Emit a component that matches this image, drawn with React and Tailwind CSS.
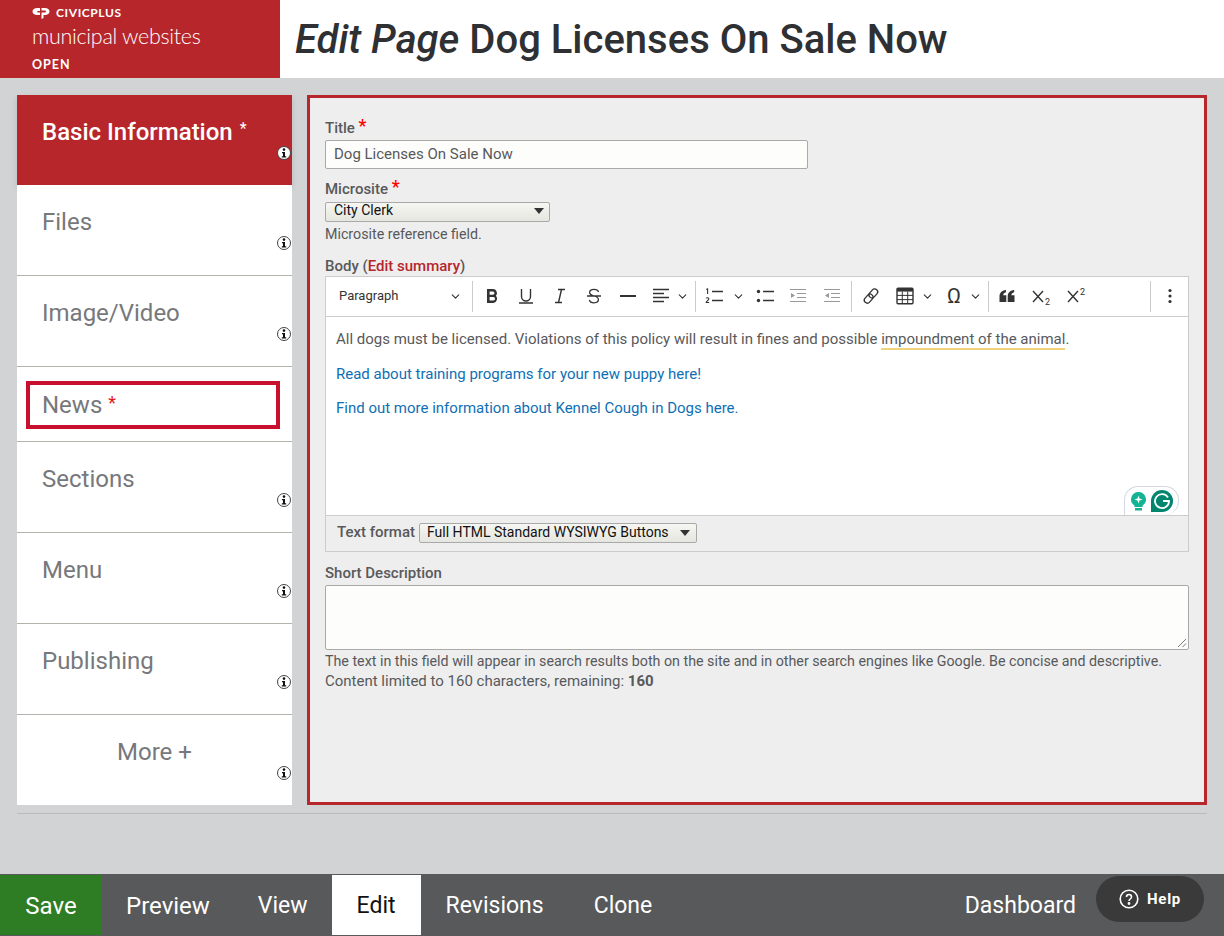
import React from 'react'
import { ChevronDown } from 'lucide-react'

const font = { fontFamily: 'Roboto, sans-serif' }

function InfoDot() {
  return (
    <span className="absolute bottom-[25px] right-[1px] flex h-[14px] w-[14px] items-center justify-center rounded-full border border-[#444] bg-white">
      <svg width="10" height="10" viewBox="0 0 10 10">
        <circle cx="5" cy="1.6" r="1.3" fill="#111" />
        <path d="M3 4h3v4.2h1.2V9.5H2.8V8.2H4V5.2H3z" fill="#111" />
      </svg>
    </span>
  )
}

function Tab({ label, h, center }) {
  return (
    <div className={`relative bg-white ${h} ${center ? 'pl-0 text-center' : 'border-b border-[#b3b3ab] pl-[25px]'} pt-[22px] text-[24px] leading-[30px] text-[#77787b]`}>
      {label}
      <InfoDot />
    </div>
  )
}

// toolbar glyphs, drawn on a 20 box like the editor's own
function Bold() {
  return <svg width="20" height="20" viewBox="0 0 20 20"><path d="M5 3h6a4 4 0 0 1 2.9 6.7A4.4 4.4 0 0 1 11.5 17H5zM7.6 5.4v3.4h3.2a1.7 1.7 0 0 0 0-3.4zm0 5.7v3.5h3.7a1.75 1.75 0 0 0 0-3.5z" fill="#333" /></svg>
}
function Underline() {
  return <svg width="20" height="20" viewBox="0 0 20 20" fill="none" stroke="#333" strokeWidth="1.4"><path d="M5.5 3v7.5a4.5 4.5 0 0 0 9 0V3M3 17h14" /></svg>
}
function Italic() {
  return <svg width="20" height="20" viewBox="0 0 20 20" fill="none" stroke="#333" strokeWidth="1.4"><path d="M8 3.5h7M5 16.5h7M11.5 3.5l-3 13" /></svg>
}
function Strike() {
  return <svg width="20" height="20" viewBox="0 0 20 20" fill="none" stroke="#333" strokeWidth="1.3"><path d="M14.5 6C14 4 12 3.3 10 3.3 7.5 3.3 5.6 4.5 5.6 6.5c0 2 2 2.8 4.4 3.5 2.6.7 4.4 1.7 4.4 3.6 0 2-2 3.2-4.4 3.2-2.4 0-4.2-1-4.6-3M3 10h14" /></svg>
}
function Rule() {
  return <svg width="20" height="20" viewBox="0 0 20 20"><rect x="2" y="9" width="16" height="2" fill="#333" /></svg>
}
function Align() {
  return <svg width="20" height="20" viewBox="0 0 20 20" fill="none" stroke="#333" strokeWidth="1.4"><path d="M2 3.5h16M2 7.5h11M2 11.5h16M2 15.5h11" /></svg>
}
function Numbered() {
  return (
    <svg width="20" height="20" viewBox="0 0 20 20" fill="none">
      <path d="M8 5.5h11M8 14.500h11" stroke="#333" strokeWidth="1.4" />
      <path d="M3.6 2.5v5.5M2.4 3.6l1.2-1.1M2.2 12.4c.3-1 2.7-1 2.700.4 0 1.2-2.700 2.400-2.700 3.700h3" stroke="#333" strokeWidth="1.1" />
    </svg>
  )
}
function Bulleted() {
  return (
    <svg width="20" height="20" viewBox="0 0 20 20" fill="none">
      <circle cx="3.500" cy="5.500" r="1.700" fill="#333" />
      <circle cx="3.500" cy="14.500" r="1.700" fill="#333" />
      <path d="M8 5.500h11M8 14.500h11" stroke="#333" strokeWidth="1.4" />
    </svg>
  )
}
function Indent({ out }) {
  return (
    <svg width="20" height="20" viewBox="0 0 20 20" fill="none">
      <path d="M2 3.500h16M9 7.500h9M9 11.500h9M2 15.500h16" stroke="#999" strokeWidth="1.2" />
      <path d={out ? 'M7 7l-4 2.500 4 2.500z' : 'M3 7l4 2.500-4 2.500z'} fill="#999" />
    </svg>
  )
}
function LinkIcon() {
  return (
    <svg width="20" height="20" viewBox="0 0 20 20" fill="none" stroke="#333" strokeWidth="1.3">
      <g transform="rotate(42 10 10)">
        <rect x="7" y="1.500" width="6" height="10" rx="3" />
        <rect x="7" y="8.500" width="6" height="10" rx="3" />
      </g>
    </svg>
  )
}
function TableIcon() {
  return (
    <svg width="18" height="18" viewBox="0 0 18 18" fill="none">
      <rect x="1" y="1.200" width="16" height="15.600" rx="1" stroke="#333" strokeWidth="1.4" />
      <rect x="1" y="1.200" width="16" height="3.400" fill="#333" />
      <path d="M1 8.400h16M1 12.600h16M6.300 4.600v12M11.700 4.600v12" stroke="#333" strokeWidth="1" />
    </svg>
  )
}
function Quote() {
  return <svg width="20" height="20" viewBox="0 0 20 20" fill="#333"><path d="M2.500 16V10.500C2.500 7 4.500 4.500 9 4v2.300C7 6.800 6.200 8 6.200 9.300H9.300V16zM10.700 16V10.500C10.700 7 12.700 4.500 17.200 4v2.300C15.200 6.800 14.400 8 14.400 9.300H17.500V16z" /></svg>
}
function Sub({ sup }) {
  return (
    <svg width="22" height="20" viewBox="0 0 22 20" fill="none">
      <path d="M2 5l10 11M12 5L2 16" stroke="#333" strokeWidth="1.4" />
      <text x="14" y={sup ? 9 : 19} fontSize="9" fill="#333" fontFamily="Roboto, sans-serif">2</text>
    </svg>
  )
}

function Sep({ ml, mr }) {
  return <span className={`h-[31px] w-px bg-[#ccc] ${ml} ${mr}`} />
}

const Chev = ({ c }) => <ChevronDown size={13} strokeWidth={2} className={`text-[#333] ${c}`} />

function SelectArrow() {
  return <span className="h-0 w-0 border-x-[5px] border-t-[6px] border-x-transparent border-t-[#333]" />
}

export default function App() {
  return (
    <div className="flex h-[936px] flex-col bg-[#d1d3d4]" style={font}>
      <header className="flex h-[78px] bg-white">
        <div className="flex w-[280px] flex-col bg-[#b7262b] pl-[32px] pt-[6px] text-white">
          <div className="flex items-center gap-[6px]">
            <svg width="18" height="12" viewBox="0 0 18 12" fill="#fff">
              <path d="M5.500 1H8V4H5.500a2 2 0 0 0 0 1.500H8V8H5C2.500 8 .5 6.500.5 4.500S2.500 1 5.500 1z" />
              <path d="M9.500 1H13c2.500 0 4.500 1.300 4.500 3.500S15.500 8 13 8h-1.500v3L9.500 12V5.500H13a1 1 0 0 0 0-2H9.500z" />
            </svg>
            <span className="text-[12px] font-bold leading-[14px] tracking-[0.6px]" style={{ fontFamily: 'Lato, sans-serif' }}>CIVICPLUS</span>
          </div>
          <div className="mt-[3px] text-[21.500px] font-light leading-[26px] tracking-[-0.3px]" style={{ fontFamily: 'Lato, sans-serif' }}>municipal websites</div>
          <div className="mt-[9px] text-[12.500px] font-bold leading-[14px] tracking-[1px]" style={{ fontFamily: 'Lato, sans-serif' }}>OPEN</div>
        </div>
        <h1 className="pl-[15px] pt-[15px] text-[40px] font-medium leading-[50px] text-[#2f3033]">
          <em className="pr-[10px] italic">Edit Page</em>Dog Licenses On Sale Now
        </h1>
      </header>

      <div className="mx-[17px] mt-[17px] flex h-[710px] gap-[15px]">
        <nav className="flex w-[275px] shrink-0 flex-col">
          <div className="relative h-[90px] bg-[#b7262b] pl-[25px] pt-[19px] text-[24px] font-medium leading-[30px] text-white shadow-[0_3px_6px_rgba(0,0,0,0.12)]">
            Basic Information<span className="ml-[7px] align-[6px] text-[16px] font-normal">*</span>
            <InfoDot />
          </div>
          <Tab label="Files" h="h-[91px]" />
          <Tab label="Image/Video" h="h-[91px]" />
          <div className="h-[75px] border-b border-[#b3b3ab] bg-white pl-[9px] pt-[14px]">
            <div className="h-[48px] w-[254px] border-[4px] border-[#c8102e] pl-[12px] pt-[2px] text-[24px] leading-[32px] text-[#77787b]">
              News<span className="ml-[6px] align-[4px] text-[18px] text-[#e8141c]">*</span>
            </div>
          </div>
          <Tab label="Sections" h="h-[91px]" />
          <Tab label="Menu" h="h-[91px]" />
          <Tab label="Publishing" h="h-[91px]" />
          <Tab label="More +" h="h-[90px]" center />
        </nav>

        <main className="flex w-[900px] flex-col border-[3px] border-[#b7262b] bg-[#eeeeee] pl-[15px] pr-[15px] pt-[20px] text-[#58595b]">
          <label className="text-[15px] font-medium leading-[20px]">
            Title <span className="align-[1px] text-[18px] leading-[10px] text-[#f00]">*</span>
          </label>
          <div className="mt-[2px] flex h-[29px] w-[483px] items-center rounded-[2px] border border-[#a9a9a9] bg-[#fdfdfb] pl-[8px] text-[15px]">
            Dog Licenses On Sale Now
          </div>

          <label className="mt-[10px] text-[15px] font-medium leading-[20px]">
            Microsite <span className="align-[1px] text-[18px] leading-[10px] text-[#f00]">*</span>
          </label>
          <div className="mt-[3px] flex h-[20px] w-[225px] items-center justify-between rounded-[2px] border border-[#a9a9a9] bg-gradient-to-b from-[#f6f6f2] to-[#e6e6e0] pb-[3px] pl-[8px] pr-[5px] text-[14px] text-[#111]">
            City Clerk
            <SelectArrow />
          </div>
          <div className="mt-[2px] text-[14.250px] leading-[20px]">Microsite reference field.</div>

          <label className="mt-[12px] text-[15px] font-medium leading-[20px]">
            Body (<span className="text-[#b7262b]">Edit summary</span>)
          </label>

          <div className="w-[864px] border border-[#ccc]">
            <div className="flex h-[40px] items-center border-b border-[#ccc] bg-white pb-[1px] text-[#333]">
              <span className="w-[106px] pl-[13px] text-[13px]">Paragraph</span>
              <Chev c="ml-[17px]" />
              <Sep ml="ml-[10px]" mr="mr-[9px]" />
              <Bold />
              <span className="ml-[14px] flex"><Underline /></span>
              <span className="ml-[14px] flex"><Italic /></span>
              <span className="ml-[14px] flex"><Strike /></span>
              <span className="ml-[14px] flex"><Rule /></span>
              <span className="ml-[13px] flex"><Align /></span>
              <Chev c="ml-[5px]" />
              <Sep ml="ml-[6px]" mr="mr-[8px]" />
              <Numbered />
              <Chev c="ml-[8px]" />
              <span className="ml-[10px] flex"><Bulleted /></span>
              <span className="ml-[13px] flex"><Indent /></span>
              <span className="ml-[14px] flex"><Indent out /></span>
              <Sep ml="ml-[9px]" mr="mr-[9px]" />
              <LinkIcon />
              <span className="ml-[15px] flex"><TableIcon /></span>
              <Chev c="ml-[7px]" />
              <span className="ml-[13px] text-[21px] leading-[20px]">Ω</span>
              <Chev c="ml-[8px]" />
              <Sep ml="ml-[6px]" mr="mr-[8px]" />
              <Quote />
              <span className="ml-[14px] flex"><Sub /></span>
              <span className="ml-[13px] flex"><Sub sup /></span>
              <Sep ml="ml-[62px]" mr="mr-[9px]" />
              <svg width="20" height="20" viewBox="0 0 20 20" fill="#333"><circle cx="10" cy="4.500" r="1.600" /><circle cx="10" cy="10" r="1.600" /><circle cx="10" cy="15.500" r="1.600" /></svg>
            </div>
            <div className="relative h-[198px] bg-white pl-[10px] pt-[12px] text-[15px] leading-[20px]">
              <p>
                All dogs must be licensed. Violations of this policy will result in fines and possible{' '}
                <span className="border-b-2 border-[#f0d37a]">impoundment of the animal</span>.
              </p>
              <p className="mt-[14.500px] text-[#0f6fb5]">Read about training programs for your new puppy here!</p>
              <p className="mt-[14.500px] text-[#0f6fb5]">Find out more information about Kennel Cough in Dogs here.</p>
              {/* grammarly badge */}
              <div className="absolute bottom-0 right-[9px] flex h-[29px] w-[55px] items-center justify-center gap-[5px] rounded-t-[14px] rounded-br-[14px] border border-b-0 border-[#d5d8e4] bg-white">
                <svg width="15" height="19" viewBox="0 0 15 19">
                  <path d="M7.500 0a7.500 7.500 0 0 1 4 13.800V15h-8v-1.200A7.500 7.500 0 0 1 7.500 0z" fill="#13b394" />
                  <rect x="4" y="16" width="7" height="2.500" fill="#13b394" />
                  <path d="M7.500 3.500l1 3 3 1-3 1-1 3-1-3-3-1 3-1z" fill="#fff" />
                </svg>
                <svg width="22" height="22" viewBox="0 0 22 22">
                  <path d="M11 0a11 11 0 0 1 0 22H0V11A11 11 0 0 1 11 0z" fill="#00856f" />
                  <path d="M17 7.500A7 7 0 1 0 18 11h-6" fill="none" stroke="#fff" strokeWidth="1.800" />
                </svg>
              </div>
            </div>
            <div className="flex h-[36px] items-center border-t border-[#ccc] bg-[#eeeeee] pb-[2px] pl-[11px]">
              <span className="text-[15px] font-medium">Text format</span>
              <div className="ml-[4px] flex h-[20px] w-[278px] items-center justify-between rounded-[2px] border border-[#a9a9a9] bg-gradient-to-b from-[#f6f6f2] to-[#e6e6e0] pl-[7px] pr-[6px] text-[14px] text-[#111]">
                Full HTML Standard WYSIWYG Buttons
                <SelectArrow />
              </div>
            </div>
          </div>

          <label className="mt-[11px] text-[15px] font-medium leading-[20px]">Short Description</label>
          <div className="relative mt-[2px] h-[65px] w-[864px] rounded-[2px] border border-[#a9a9a9] bg-[#fdfdfb]">
            <svg className="absolute bottom-[1px] right-[1px]" width="10" height="10" viewBox="0 0 10 10" stroke="#777" fill="none"><path d="M1 9l8-8M5.500 9L9 5.500" /></svg>
          </div>
          <p className="mt-[1px] text-[14.250px] leading-[20px]">
            The text in this field will appear in search results both on the site and in other search engines like Google. Be concise and descriptive.
          </p>
          <p className="text-[15px] leading-[20px]">
            Content limited to 160 characters, remaining: <strong className="font-bold">160</strong>
          </p>
        </main>
      </div>

      <div className="mx-[17px] mt-[8px] h-px bg-[#b9bbbc]" />

      <footer className="relative mt-auto flex h-[62px] items-center bg-[#58595b] text-[23px] text-white">
        <span className="flex h-[60px] w-[102px] items-center justify-center bg-[#2e7d25] pt-[1px] text-[24px]">Save</span>
        <span className="ml-[24px] mt-[1px] text-[24px]">Preview</span>
        <span className="ml-[48px] mt-[3px]">View</span>
        <span className="ml-[24px] flex h-[60px] w-[89px] items-center justify-center bg-white pt-[3px] text-[#111]">Edit</span>
        <span className="ml-[25px] mt-[3px]">Revisions</span>
        <span className="ml-[50px] mt-[3px]">Clone</span>
        <span className="ml-auto mr-[148px] mt-[3px]">Dashboard</span>
        <div className="absolute right-[20px] top-[2px] flex h-[46px] w-[108px] items-center justify-center gap-[8px] rounded-[23px] bg-[#3a3a3a] text-[15px] font-bold tracking-[0.7px]">
          <svg width="20" height="20" viewBox="0 0 20 20" fill="none" stroke="#fff" strokeWidth="1.600">
            <circle cx="10" cy="10" r="8.800" />
            <path d="M7.500 8c0-3.300 5-3.300 5 0 0 2-2.500 2-2.500 4" />
            <circle cx="10" cy="14.500" r=".6" fill="#fff" />
          </svg>
          Help
        </div>
      </footer>
    </div>
  )
}
